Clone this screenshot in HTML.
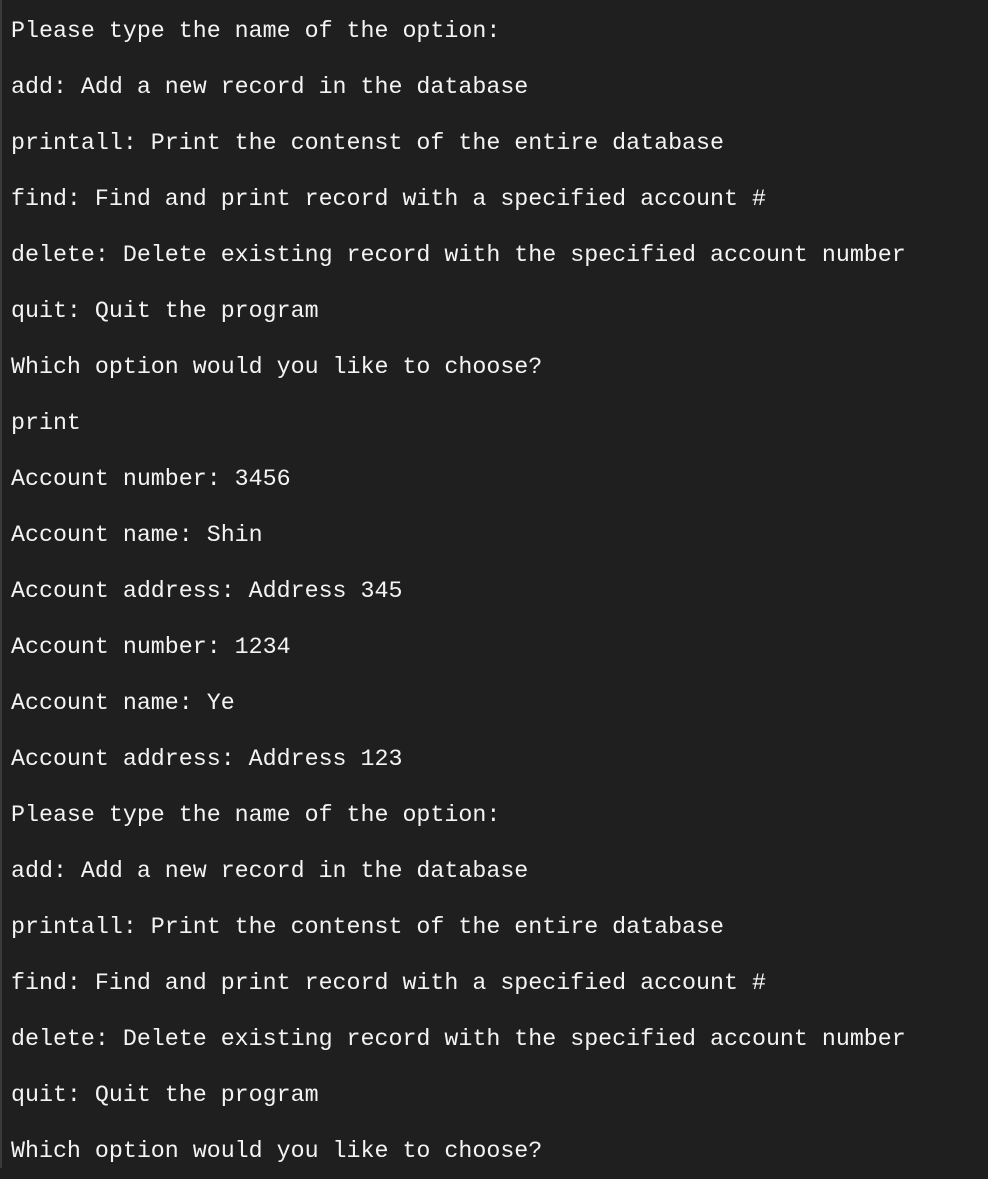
<!DOCTYPE html>
<html><head><meta charset="utf-8"><style>
html,body{margin:0;padding:0;width:988px;height:1168px;overflow:hidden;background:#1f1f1f;}
body{border-left:2px solid #3a3a3a;box-sizing:border-box;}
.t{position:absolute;left:11px;top:3px;font-family:"Liberation Mono",monospace;font-size:23.3px;line-height:56px;color:#f4f4f4;white-space:pre;}
</style></head><body><div class="t">Please type the name of the option:
add: Add a new record in the database
printall: Print the contenst of the entire database
find: Find and print record with a specified account #
delete: Delete existing record with the specified account number
quit: Quit the program
Which option would you like to choose?
print
Account number: 3456
Account name: Shin
Account address: Address 345
Account number: 1234
Account name: Ye
Account address: Address 123
Please type the name of the option:
add: Add a new record in the database
printall: Print the contenst of the entire database
find: Find and print record with a specified account #
delete: Delete existing record with the specified account number
quit: Quit the program
Which option would you like to choose?</div></body></html>
